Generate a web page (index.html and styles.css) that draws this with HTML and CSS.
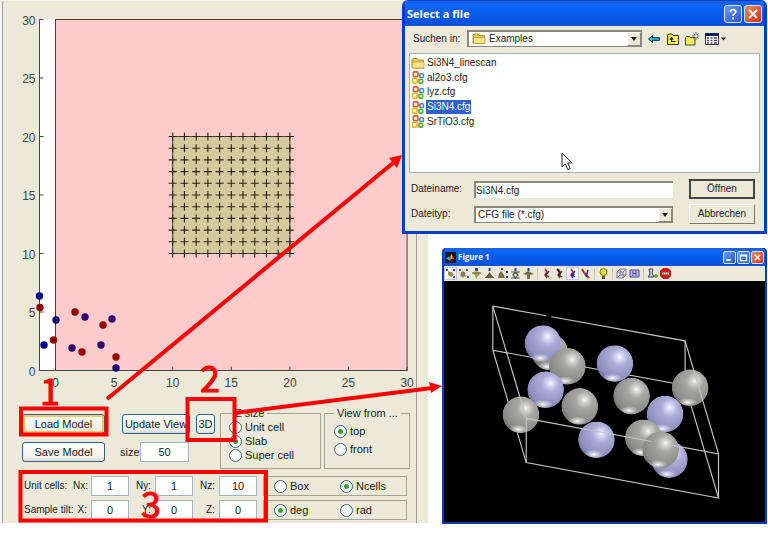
FILE: index.html
```html
<!DOCTYPE html>
<html lang="en">
<head>
<meta charset="utf-8">
<title>Load Model</title>
<link rel="stylesheet" href="styles.css">
</head>
<body>
<main class="desktop">
  <section class="panel">
    <div class="panel-inner">
      <svg class="chart" viewBox="3 0 413 405" role="img" aria-label="Model top view" id="chart"></svg>

      <div class="controls">
        <div class="actions">
          <div class="row">
            <button class="btn wide focus">Load Model</button>
            <button class="btn update">Update View</button>
            <button class="btn small">3D</button>
          </div>
          <div class="row">
            <button class="btn wide">Save Model</button>
            <label class="size-label" for="size">size</label>
            <input class="num size" id="size" value="50">
          </div>
        </div>
        <fieldset class="group zsize">
          <legend>Z size</legend>
          <label><input type="radio" name="z">Unit cell</label>
          <label><input type="radio" name="z" checked>Slab</label>
          <label><input type="radio" name="z">Super cell</label>
        </fieldset>
        <fieldset class="group view">
          <legend>View from ...</legend>
          <label><input type="radio" name="v" checked>top</label>
          <label><input type="radio" name="v">front</label>
        </fieldset>
      </div>

      <div class="params">
        <span>Unit cells:</span>
        <label for="nx">Nx:</label><input class="num" id="nx" value="1">
        <label for="ny">Ny:</label><input class="num" id="ny" value="1">
        <label for="nz">Nz:</label><input class="num" id="nz" value="10">
        <div class="pair">
          <label><input type="radio" name="n">Box</label>
          <label><input type="radio" name="n" checked>Ncells</label>
        </div>
        <span>Sample tilt:</span>
        <label for="tx">X:</label><input class="num" id="tx" value="0">
        <label for="ty">Y:</label><input class="num" id="ty" value="0">
        <label for="tz">Z:</label><input class="num" id="tz" value="0">
        <div class="pair">
          <label><input type="radio" name="a" checked>deg</label>
          <label><input type="radio" name="a">rad</label>
        </div>
      </div>
    </div>
  </section>

  <div class="windows">
    <section class="dialog">
      <header class="titlebar">
        <h1>Select a file</h1>
        <button class="cap" aria-label="Help"><svg viewBox="0 0 18 18"><path d="M6 7q0-3 3-3t3 2.600q0 1.400-1.600 2.300Q9 9.700 9 11.300M9 13v2" fill="none" stroke="#fff" stroke-width="2"/></svg></button>
        <button class="cap close" aria-label="Close"><svg viewBox="0 0 18 18"><path d="M4.500 4.500l9 9M13.500 4.500l-9 9" stroke="#fff" stroke-width="2.200"/></svg></button>
      </header>
      <div class="lookin">
        <label for="folder">Suchen in:</label>
        <div class="combo">
          <svg class="folder" viewBox="0 0 14 12"><use href="#folder-icon"/></svg>
          <select id="folder"><option>Examples</option></select>
          <span class="drop"></span>
        </div>
        <svg class="tool" viewBox="0 0 14 14"><path d="M1.500 7l4-3.500v2.200h7v2.600h-7v2.200z" fill="#20c8d0" stroke="#124" stroke-width="1"/></svg>
        <svg class="tool" viewBox="0 0 14 14"><path d="M1.500 12.500v-9l1-1.500h3.500l1 1.500h5.500v9z" fill="#f5ee60" stroke="#332" /><path d="M5.500 9.500V6M3.800 7.200l1.700-2 1.700 2z" fill="#222" stroke="#222"/><path d="M5 9.500h4.500" stroke="#222"/></svg>
        <svg class="tool" viewBox="0 0 14 14"><path d="M.500 13V5.500l1-1h3l1 1h4.500V13z" fill="#f5ee60" stroke="#443"/><path d="M11 0v8M7 4h7M8.500 1.500l5 5M13.500 1.500l-5 5" stroke="#555" stroke-width=".8"/><circle cx="11" cy="4" r="1" fill="#fff"/></svg>
        <svg class="tool views" viewBox="0 0 22 14"><path d="M1.500 1.500h13v11h-13z" fill="#fff" stroke="#334"/><path d="M1 1h14v3H1z" fill="#125"/><path d="M3 6h2M6.500 6h2M10 6h3M3 8.500h2M6.500 8.500h2M10 8.500h3M3 11h2M6.500 11h2M10 11h3" stroke="#447" stroke-width="1.300"/><path d="M17 5.500h5l-2.500 3z" fill="#111"/></svg>
      </div>
      <ul class="files">
        <li><svg viewBox="0 0 14 12"><use href="#folder-icon"/></svg><span>Si3N4_linescan</span></li>
        <li><svg viewBox="0 0 14 14"><use href="#cfg-icon"/></svg><span>al2o3.cfg</span></li>
        <li><svg viewBox="0 0 14 14"><use href="#cfg-icon"/></svg><span>lyz.cfg</span></li>
        <li class="selected"><svg viewBox="0 0 14 14"><use href="#cfg-icon"/></svg><span>Si3N4.cfg</span></li>
        <li><svg viewBox="0 0 14 14"><use href="#cfg-icon"/></svg><span>SrTiO3.cfg</span></li>
      </ul>
      <div class="form">
        <label for="fname">Dateiname:</label>
        <input class="fname" id="fname" value="Si3N4.cfg">
        <button class="classic default">Öffnen</button>
        <label for="ftype">Dateityp:</label>
        <div class="combo">
          <select id="ftype"><option>CFG file (*.cfg)</option></select>
          <span class="drop"></span>
        </div>
        <button class="classic">Abbrechen</button>
      </div>
    </section>

    <section class="figure">
      <header class="titlebar slim">
        <svg class="logo" viewBox="0 0 12 12"><path d="M0 0h12v12H0z" fill="#181818"/><path d="M1 7l3-2 2 2-2 2z" fill="#3ac"/><path d="M4 8l3-6 4 7-3-2-3 3z" fill="#e4501c"/><path d="M7 2l1 5-2 1z" fill="#fc4"/></svg>
        <h2>Figure 1</h2>
        <button class="cap" aria-label="Minimize"><svg viewBox="0 0 18 18"><path d="M4 13h7" stroke="#fff" stroke-width="3"/></svg></button>
        <button class="cap" aria-label="Maximize"><svg viewBox="0 0 18 18"><path d="M4 5h10v9H4zM4 6.500h10" fill="none" stroke="#fff" stroke-width="2"/></svg></button>
        <button class="cap close" aria-label="Close"><svg viewBox="0 0 18 18"><path d="M4.500 4.500l9 9M13.500 4.500l-9 9" stroke="#fff" stroke-width="2.500"/></svg></button>
      </header>
      <div class="toolbar">
        <svg class="on" viewBox="0 0 13 13"><path d="M4 5l4 0 2 3-3 2-3-2z" fill="#998a48"/><path d="M2 2h2v2H2zM9 2h2v2H9zM9 9h2v2H9z" fill="#33a"/><path d="M3 3l7 7" stroke="#886"/></svg>
        <svg viewBox="0 0 13 13"><circle cx="6" cy="7" r="2.500" fill="#887d50"/><path d="M2 2h2v2H2zM9 2h2v2H9zM10 9h2v2h-2z" fill="#55a"/><path d="M3 9h7M6 4v7" stroke="#776" stroke-width=".7"/></svg>
        <svg viewBox="0 0 13 13"><path d="M2 6l4-2 5 2-2 2-3 4-1-4z" fill="#a59a50"/><path d="M5 1h3v3H5z" fill="#44a"/><path d="M2 6h9" stroke="#776"/></svg>
        <svg viewBox="0 0 13 13"><path d="M6.500 5l2 3 3 3h-10l3-3z" fill="#66603a"/><path d="M5.500 1h2v3h-2z" fill="#33b"/></svg>
        <svg viewBox="0 0 13 13"><path d="M5 4l3 4 1 3H2l1-4z" fill="#776d3c"/><path d="M5 1h2v2H5zM10 4h2v2h-2zM10 9h2v2h-2z" fill="#339"/></svg>
        <svg viewBox="0 0 13 13"><path d="M2 5h9M2 11h9M4 8l2.500-3L9 8l-2.500 3z" fill="none" stroke="#554" stroke-width="1.200"/><path d="M5.500 1h2v3h-2z" fill="#33b"/></svg>
        <svg viewBox="0 0 13 13"><path d="M1 7l5-3 6 3-4 1v4H5V8z" fill="#77703c"/><path d="M5.500 1h2v3h-2z" fill="#33b"/></svg>
        <i></i>
        <svg viewBox="0 0 13 13"><use href="#axis"/></svg>
        <svg viewBox="0 0 13 13"><use href="#axis"/><path d="M4 2l3 4-1 3" stroke="#222" stroke-width="1.500" fill="none"/></svg>
        <svg class="on" viewBox="0 0 13 13"><use href="#axis"/><path d="M6 6l3 1-3 4z" fill="#22d"/></svg>
        <svg viewBox="0 0 13 13"><path d="M3 2l3 5 4 4" fill="none" stroke="#c22" stroke-width="2"/><path d="M9 3L7 10" stroke="#239" stroke-width="1.500"/></svg>
        <i></i>
        <svg viewBox="0 0 13 13"><circle cx="6.500" cy="5" r="3.500" fill="#e8e020" stroke="#772"/><path d="M5 9h3v3H5z" fill="#554"/></svg>
        <i></i>
        <svg viewBox="0 0 13 13"><path d="M2 5h6v6H2zM5 2h6v6H5zM2 5l3-3M8 5l3-3M8 11l3-3M2 11l3-3" fill="none" stroke="#77a"/></svg>
        <svg viewBox="0 0 13 13"><path d="M2 3h9v7H2z" fill="#bbd" stroke="#44a"/><path d="M5 4v5M8 4v5M5 6.500h3" stroke="#55a"/></svg>
        <i></i>
        <svg viewBox="0 0 13 13"><path d="M3 2h4l-1 4 2 4H2l2-3z" fill="#ccc" stroke="#446"/><path d="M8 9h4M10 7v4" stroke="#7a3" stroke-width="2"/></svg>
        <svg viewBox="0 0 13 13"><path d="M4 1h5l3 3v5l-3 3H4L1 9V4z" fill="#d01818"/><path d="M3 6.500h7" stroke="#fff" stroke-width="2" stroke-dasharray="1.500 .5"/></svg>
      </div>
      <svg class="scene" viewBox="24 -27 960 720" role="img" aria-label="Crystal structure" id="scene">
        <defs>
          <radialGradient id="gray" cx=".63" cy=".32" r=".8"><stop offset="0" stop-color="#f4f4f4"/><stop offset=".12" stop-color="#d0d0ce"/><stop offset=".3" stop-color="#a6a6a3"/><stop offset=".75" stop-color="#8a8a88"/><stop offset="1" stop-color="#5c5c5a"/></radialGradient>
          <radialGradient id="blue" cx=".63" cy=".32" r=".8"><stop offset="0" stop-color="#fafaff"/><stop offset=".12" stop-color="#d4d4f4"/><stop offset=".3" stop-color="#acacd8"/><stop offset=".75" stop-color="#8e8ebc"/><stop offset="1" stop-color="#5c5c8a"/></radialGradient>
          <radialGradient id="glow"><stop offset="0" stop-color="#fff"/><stop offset=".3" stop-color="#fff" stop-opacity=".6"/><stop offset="1" stop-color="#fff" stop-opacity="0"/></radialGradient>
          <clipPath id="ball"><circle r="55"/></clipPath>
        </defs>
      </svg>
    </section>
  </div>

  <svg class="notes" viewBox="0 0 768 549" aria-hidden="true">
    <g fill="none" stroke="#f00" stroke-width="4">
      <path d="M21 408.500h85.500v26H21zM187.500 399h47v41h-47zM20.500 472h245.500v48.500H20.500z"/>
      <path d="M107 399L393 163M235 413L432 388"/>
    </g>
    <path d="M402 155l-5 13-8-10zM442 386l-11 7-2-11z" fill="#f00"/>
    <path d="M562 153v14l3.300-3 2.400 5.500 2.400-1-2.400-5.500h4.500z" fill="#fff" stroke="#222"/>
    <text x="40" y="405">1</text><text x="200" y="392">2</text><text x="141" y="518">3</text>
  </svg>
</main>

<svg class="symbols" aria-hidden="true">
  <symbol id="folder-icon" viewBox="0 0 14 12"><path d="M1 10.500V2.500L2 1h4l1 1.500h5.500v8z" fill="#f0c850" stroke="#b08a30"/><path d="M1.500 10.500V4.500h11.500v6z" fill="#fbe58c" stroke="#c09a3c" stroke-width=".8"/></symbol>
  <symbol id="cfg-icon" viewBox="0 0 14 14"><g fill="#fff" stroke-width="1.800"><rect x="2" y="1" width="5" height="5" rx="1" stroke="#e0582c"/><rect x="9" y="3" width="4" height="4" rx="1" stroke="#4a8ad4"/><rect x="1" y="8" width="5" height="5" rx="1" stroke="#f0b428"/><rect x="8" y="9" width="4" height="4" rx="1" stroke="#62a83c"/></g></symbol>
  <symbol id="axis" viewBox="0 0 13 13"><path d="M5 2l2 3-2 3 2 3" fill="none" stroke="#c22" stroke-width="1.600"/><path d="M9 4L6 8l3 2" fill="none" stroke="#336" stroke-width="1.500"/></symbol>
</svg>
<script src="script.js"></script>
</body>
</html>
```
FILE: styles.css
```css
* { box-sizing: border-box; }

body {
  margin: 0;
  background: #fff;
  color: #222;
  font: 11px/14px "Liberation Sans", Arial, sans-serif;
}

h1, h2, ul, fieldset, legend { margin: 0; padding: 0; }
button, input, select { font: inherit; color: inherit; margin: 0; padding: 0; }
.symbols { position: absolute; width: 0; height: 0; }

.desktop {
  position: relative;
  display: grid;
  grid-template-columns: minmax(0, 428fr) minmax(0, 340fr);
  align-items: start;
}

/* Main panel */
.panel {
  background: #ece9d8;
  border-top: 1px solid #f6f5ee;
  padding: 0 11px 0 2px;
  box-shadow: inset 2px 0 #f4f4f0;
}
.panel-inner {
  border-left: 1px solid #a5a5a5;
  border-right: 1px solid #a09e94;
  padding-bottom: 3px;
}
.chart { display: block; width: 100%; }
.chart text { font-size: 12px; fill: #444; }
.chart .end { text-anchor: end; }
.chart .mid { text-anchor: middle; }

.controls {
  display: flex;
  gap: 3px;
  padding: 0 6px 0 19px;
}
.actions { flex: 1; display: grid; gap: 8px; align-content: start; padding-top: 8px; }
.row { display: flex; align-items: center; }

.btn {
  height: 20px;
  border: 1px solid #33618f;
  border-radius: 3px;
  background: linear-gradient(#fff, #f1f0ea 80%, #dcd8cc);
  white-space: nowrap;
}
.wide { width: 83px; }
.focus { box-shadow: inset 0 0 0 2px #f4c768; }
.update { width: 68px; margin: 0 6px 0 17px; }
.small { width: 19px; }
.size-label { margin-left: 15px; width: 20px; }
.num {
  width: 100%;
  height: 20px;
  border: 1px solid #9fb3c8;
  background: #fff;
  text-align: center;
}
.num.size { width: 49px; }

.group { border: 1px solid #a5a497; min-width: 0; height: 63px; }
.group legend { padding: 0 3px; line-height: 14px; }
.group label { display: flex; align-items: center; gap: 3px; height: 14px; white-space: nowrap; }
.zsize { width: 101px; padding-left: 8px; }
.zsize legend { margin-left: 3px; }
.view { width: 86px; padding-left: 9px; }
.view legend { margin: 0 auto 4px 0; }
.view label + label { margin-top: 4px; }

input[type="radio"] {
  appearance: none;
  flex: none;
  width: 13px;
  height: 13px;
  border: 1px solid #3a6288;
  border-radius: 50%;
  background: #fafafa;
}
input[type="radio"]:checked { background: radial-gradient(circle, #2ca42c 2px, #f6f8f6 3px); }

.params {
  display: grid;
  grid-template-columns: 49px 18px 38px 26px 38px 26px 38px minmax(0, 1fr);
  gap: 4px 0;
  align-items: center;
  padding: 7px 9px 0 21px;
}
.params > span, .params > label { white-space: nowrap; font-size: 10px; }
.params > label { padding-right: 4px; text-align: right; }
.pair {
  display: grid;
  grid-template-columns: 1fr 1fr;
  height: 20px;
  margin-left: 6px;
  padding-left: 10px;
  border: 1px solid #a5a497;
}
.pair label { display: flex; align-items: center; gap: 3px; }

/* Windows on the right */
.windows { display: grid; gap: 14px; padding-right: 1px; }
.titlebar {
  display: flex;
  align-items: center;
  gap: 2px;
  height: 25px;
  padding: 0 2px;
  background: linear-gradient(#1c5fe0, #0a66f8 20%, #0558e8 60%, #0650d8);
  color: #fff;
}
.titlebar h1, .titlebar h2 { flex: 1; font: bold 11px/16px "Open Sans", sans-serif; }
.cap {
  width: 18px;
  height: 18px;
  border: 1px solid #d8e4fa;
  border-radius: 3px;
  background: linear-gradient(135deg, #6e98f4, #2457d4);
}
.cap svg { display: block; width: 100%; height: 100%; }
.cap.close { background: linear-gradient(135deg, #ee8a6a, #cc3410); }

.dialog {
  position: relative;
  margin-left: -26px;
  border: 3px solid #0a3ccc;
  border-top-width: 1px;
  border-radius: 6px 6px 0 0;
  background: #ece9d8;
  font-size: 10px;
  overflow: hidden;
  padding-bottom: 7px;
}
.lookin { display: flex; align-items: center; gap: 5px; padding: 4px 38px 0 8px; }
.lookin label { width: 49px; white-space: nowrap; }
.combo { position: relative; flex: 1; height: 17px; border: 1px solid #8a887c; border-width: 2px 1px 1px 2px; background: #fff; }
.combo select { appearance: none; display: block; width: 100%; height: 14px; border: 0; background: none; padding-left: 2px; line-height: 14px; }
.lookin select { padding-left: 20px; }
.folder { position: absolute; left: 3px; top: 1px; width: 14px; height: 12px; }
.drop {
  position: absolute;
  right: 0;
  top: 0;
  width: 14px;
  height: 14px;
  border: 1px solid #9a988c;
  border-color: #fff #8a887c #8a887c #fff;
  background: #ece9d8;
  pointer-events: none;
}
.drop::after { content: ""; position: absolute; left: 3px; top: 4px; border: 3px solid transparent; border-top: 4px solid #111; border-bottom: 0; }
.tool { width: 14px; height: 14px; }
.lookin .views { width: 22px; }

.files {
  display: grid;
  grid-auto-rows: minmax(0, 1fr);
  height: 120px;
  margin: 6px 4px 0;
  padding: 2px 1px 43px;
  border: 1px solid #9db4c4;
  background: #fff;
  list-style: none;
}
.files li { display: flex; align-items: center; gap: 1px; }
.files svg { width: 14px; height: 13px; }
.files span { padding: 0 1px; line-height: 14px; }
.files .selected span { background: #2f62c4; color: #fff; }

.form {
  display: grid;
  grid-template-columns: 63px minmax(0, 1fr) 66px;
  gap: 5px 0;
  align-items: center;
  padding: 6px 9px 0 6px;
}
.fname { height: 17px; border: 1px solid #8a887c; border-width: 2px 0 0 2px; background: #fff; }
.form .combo, .fname { margin-right: 16px; }
.classic { height: 20px; border: 1px solid; border-color: #fff #77756a #77756a #fff; background: #ece9d8; }
.classic.default { border: 2px solid #444; }

.figure {
  margin-left: 14px;
  border: 2px solid #1238c0;
  border-top: 0;
  border-radius: 4px 4px 0 0;
  background: #000;
  overflow: hidden;
}
.slim { height: 18px; gap: 1px; padding: 0 1px; }
.slim h2 { font-size: 8px; line-height: 14px; padding-left: 1px; }
.slim .cap { width: 13px; height: 13px; border-radius: 2px; }
.logo { width: 11px; height: 11px; }
.toolbar { display: flex; align-items: center; height: 15px; background: #ece9d8; }
.toolbar svg { width: 13px; height: 13px; }
.toolbar .on { background: #fff; box-shadow: inset 0 0 0 1px #b8cce0; }
.toolbar i { width: 1px; height: 12px; margin: 0 2px; background: #c8c5b4; }
.scene { display: block; width: 100%; }

/* Callouts above the windows */
.notes { position: absolute; left: 0; top: 0; width: 100%; pointer-events: none; }
.notes text { font: 36px "Noto Sans CJK SC", sans-serif; fill: #f00; stroke: #f00; stroke-width: 1px; }
```
FILE: script.js
```js
const NS = "http://www.w3.org/2000/svg";
function add(parent, tag, attrs, text) {
  const el = document.createElementNS(NS, tag);
  for (const k in attrs) el.setAttribute(k, attrs[k]);
  if (text !== undefined) el.textContent = text;
  parent.appendChild(el);
  return el;
}

/* Top view chart */
const chart = document.getElementById("chart");
const px = v => 55.5 + v * 11.72;
const py = v => 369.5 - v * 11.7;
add(chart, "rect", { x: 39.5, y: py(30), width: 16, height: 351, fill: "#fff" });
add(chart, "rect", { x: px(0), y: py(30), width: px(30) - px(0), height: 351, fill: "#ffcbcb", stroke: "#444" });
add(chart, "path", { d: `M43 ${py(30)}h-3.500V369.500H${px(30)}`, fill: "none", stroke: "#444" });
for (let v = 0; v <= 30; v += 5) {
  add(chart, "path", { d: `M39.500 ${py(v)}h4M${px(v)} 369.500v-4`, stroke: "#444" });
  add(chart, "text", { x: 35.5, y: py(v) + 5, class: "end" }, v);
  add(chart, "text", { x: px(v), y: 386, class: "mid" }, v);
}
add(chart, "rect", { x: px(10), y: py(20), width: px(20) - px(10), height: 117, fill: "#d4ca9c", stroke: "#444" });
let marks = "";
for (let i = 10; i <= 20; i++)
  for (let j = 10; j <= 20; j++)
    marks += `M${px(i) - 4} ${py(j)}h8M${px(i)} ${py(j) - 4}v8`;
add(chart, "path", { d: marks, stroke: "#2a241c", "stroke-width": 1.1 });
const atoms = [
  [39.5, 295, "#00008e"], [44, 344, "#00008e"], [56, 319, "#180078"], [72, 347, "#330070"],
  [85, 316, "#330070"], [101, 344, "#330070"], [112, 318, "#330070"], [116, 367, "#200078"],
  [40, 306.5, "#8e0000"], [53.5, 339, "#8e0000"], [75, 311, "#9a0000"], [82, 351, "#9a0000"],
  [103, 324, "#9a0000"], [116, 356, "#9a0000"]
];
for (const [x, y, c] of atoms) add(chart, "circle", { cx: x, cy: y, r: 3.7, fill: c });

/* Unit cell with atoms */
const scene = document.getElementById("scene");
const line = d => add(scene, "path", { d, fill: "none", stroke: "#c4c4c4", "stroke-width": 3.5 });
function ball(x, y, fill) {
  const g = add(scene, "g", { transform: `translate(${x} ${y})`, "clip-path": "url(#ball)" });
  add(g, "circle", { r: 55, fill: `url(#${fill})` });
  add(g, "ellipse", { cx: -8, cy: 44, rx: 30, ry: 14, fill: "url(#glow)" });
}
line("M170 48L330 77M345 80L745 152V285L170 180V48M170 180L270 516L845 622L745 285");
ball(340, 185, "gray");
ball(320, 160, "blue");
ball(393, 228, "gray");
ball(535, 220, "blue");
ball(328, 298, "blue");
ball(254, 373, "gray");
ball(430, 348, "gray");
ball(585, 317, "gray");
ball(760, 292, "gray");
ball(685, 371, "blue");
ball(480, 448, "blue");
ball(620, 442, "gray");
ball(698, 507, "blue");
ball(672, 478, "gray");
line("M170 48L270 384V516M270 384L645 453M705 464L845 490V622M845 490L745 152");
```
